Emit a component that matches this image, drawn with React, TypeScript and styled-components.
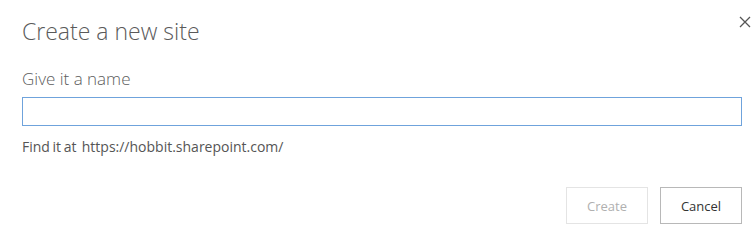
import React from "react";
import styled, { createGlobalStyle } from "styled-components";

const GlobalStyle = createGlobalStyle`
  html, body {
    margin: 0;
    padding: 0;
    background: #ffffff;
    font-family: "Open Sans", "Liberation Sans", sans-serif;
  }
`;

const Dialog = styled.div`
  position: relative;
  width: 754px;
  height: 245px;
  box-sizing: border-box;
  padding: 16px 12px 0 22px;
  display: flex;
  flex-direction: column;
`;

const Title = styled.h1`
  margin: 0;
  font-size: 23px;
  font-weight: 300;
  color: #5a5a5a;
  line-height: 30px;
`;

const CloseButton = styled.button`
  position: absolute;
  top: 13px;
  right: 0;
  width: 18px;
  height: 18px;
  padding: 0;
  border: 0;
  background: none;
  display: flex;
  align-items: center;
  justify-content: center;
`;

const Label = styled.label`
  margin-top: 22px;
  font-size: 17px;
  font-weight: 300;
  color: #5c5c5c;
  line-height: 22px;
`;

const NameInput = styled.input`
  margin-top: 7px;
  height: 29px;
  box-sizing: border-box;
  border: 1px solid #6fa3dc;
  outline: none;
  padding: 0 6px;
  font-family: inherit;
  font-size: 14px;
`;

const Hint = styled.div`
  margin-top: 11px;
  font-size: 14px;
  color: #555;
  line-height: 20px;
  word-spacing: -1px;
`;

const Actions = styled.div`
  margin-top: 30px;
  display: flex;
  justify-content: flex-end;
  gap: 12px;
`;

const ActionButton = styled.button<{ $disabled?: boolean }>`
  width: 82px;
  height: 37px;
  box-sizing: border-box;
  background: #fff;
  border: 1px solid ${(p) => (p.$disabled ? "#e4e4e4" : "#b8b8b8")};
  color: ${(p) => (p.$disabled ? "#b0b0b0" : "#333")};
  font-family: inherit;
  font-size: 13px;
  padding: 0;
`;

export default function App() {
  return (
    <>
      <GlobalStyle />
      <Dialog>
        <Title>Create a new site</Title>
        <CloseButton aria-label="Close">
          <svg width="12" height="12" viewBox="0 0 12 12">
            <path d="M1 1 L11 11 M11 1 L1 11" stroke="#555" strokeWidth="1.3" />
          </svg>
        </CloseButton>
        <Label>Give it a name</Label>
        <NameInput />
        <Hint>Find it at&nbsp; https://hobbit.sharepoint.com/</Hint>
        <Actions>
          <ActionButton $disabled disabled>Create</ActionButton>
          <ActionButton>Cancel</ActionButton>
        </Actions>
      </Dialog>
    </>
  );
}
